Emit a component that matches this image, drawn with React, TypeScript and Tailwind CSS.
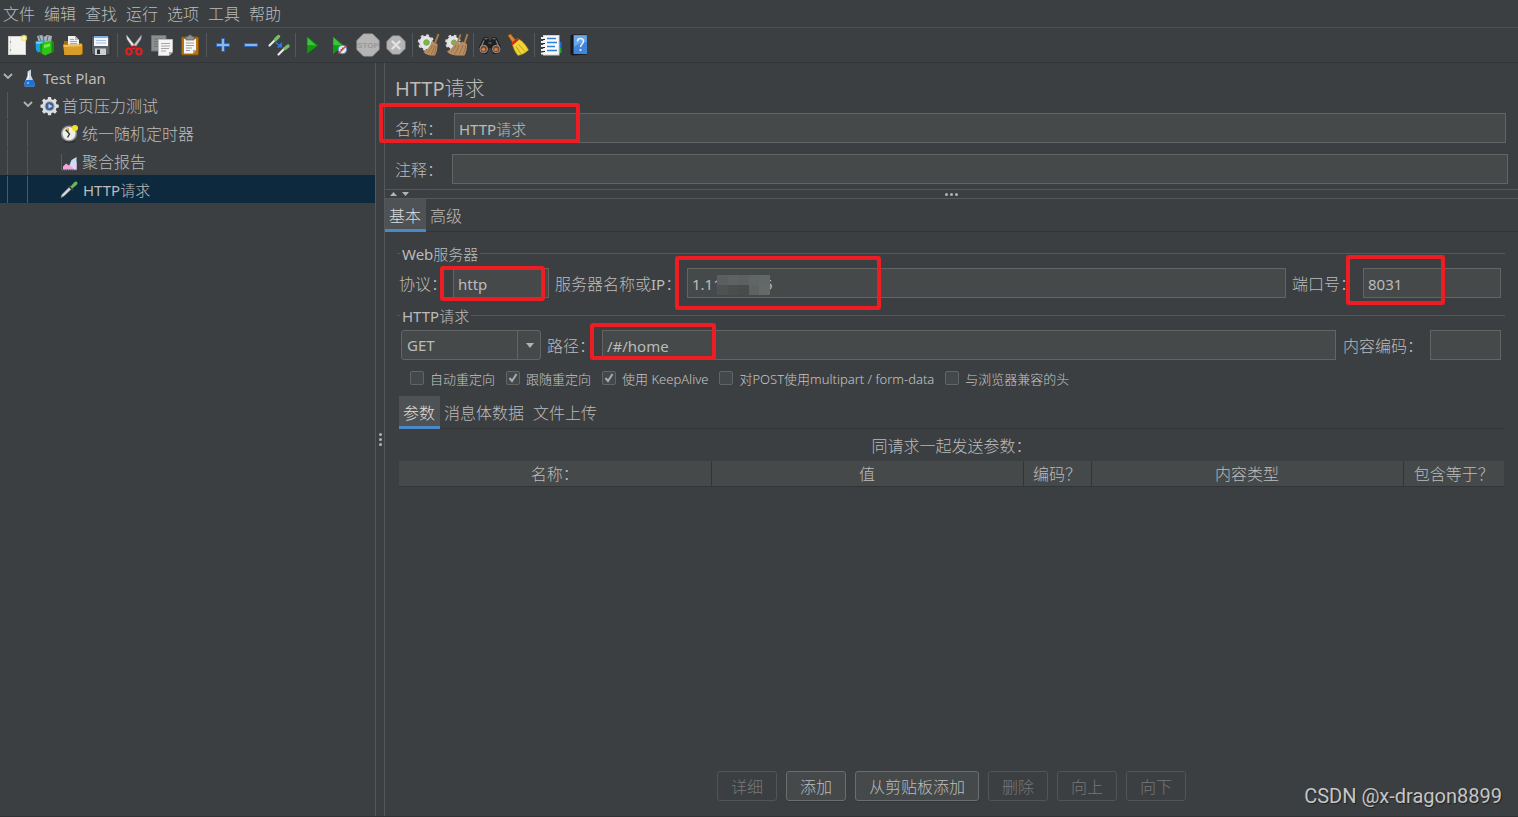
import type { ReactNode } from "react";

const menus = ["文件", "编辑", "查找", "运行", "选项", "工具", "帮助"];

function Svg({ children }: { children: ReactNode }) {
  return (
    <svg viewBox="0 0 24 24" className="size-6" aria-hidden="true">
      {children}
    </svg>
  );
}

const NewIcon = () => (
  <Svg>
    <rect x="3.5" y="3.5" width="17" height="18" fill="#f4f4f2" stroke="#cfcfcb" />
    <path d="M5.500 4v17" stroke="#e4e4e0" />
    <circle cx="5.500" cy="9" r=".7" fill="#888" />
    <circle cx="5.500" cy="17" r=".7" fill="#888" />
    <circle cx="19" cy="5" r="3.200" fill="#f1e36a" opacity=".8" />
    <circle cx="19" cy="5" r="1.500" fill="#fffbd0" />
  </Svg>
);

const TemplatesIcon = () => (
  <Svg>
    <path d="M4 3l5-1 2 2 3-2 5 1-1 6-12 1z" fill="#a9b3b5" />
    <path d="M6 3l2 5M10 3l1 5M15 3l-1 5" stroke="#5f6b6e" />
    <path d="M2.500 8l9-.8v10L5 19.500 3 17z" fill="#1d9fe0" />
    <path d="M3 9l7-.5-.5 2-6 .5z" fill="#6fd0fa" />
    <path d="M7 11.500l4-2.500v10l-3.500 2z" fill="#159a10" />
    <path d="M9.500 10l9-2.500 2.500 2v9L12 22.500l-3-2z" fill="#2fc515" />
    <path d="M18.500 7.500l2.500 2v9l-2.500 1z" fill="#128b0c" />
    <path d="M11 12l6-1.500v3L11 15z" fill="#74ea4f" />
  </Svg>
);

const OpenIcon = () => (
  <Svg>
    <path d="M3 8h4l2 2h11l2 2v9l-2 1H3z" fill="#a56d0c" />
    <path d="M7 3h7l4 4v7H7z" fill="#f1f1f1" />
    <path d="M14 3v4h4z" fill="#b9b9b9" />
    <path d="M9 6.500h4M9 8.500h7M9 10.500h7" stroke="#a5a5a5" />
    <path d="M2 11.500h16l3-1v10l-2 1.500H3.500z" fill="#d89c28" />
    <path d="M2.500 12h15.500l2.500-.8v2L3 14z" fill="#f0c25a" />
  </Svg>
);

const SaveIcon = () => (
  <Svg>
    <path d="M2.500 3h18.500v19H4.500l-2-2z" fill="#5a5f66" stroke="#2d3033" />
    <rect x="5" y="3" width="14" height="10" fill="#f3f6fa" />
    <path d="M5 3h14v2H5z" fill="#7fb0e6" />
    <path d="M7 7.500h10M7 10h10" stroke="#a8bfdc" />
    <rect x="6" y="15.500" width="11" height="6.500" fill="#cfcfcf" />
    <rect x="8" y="16.500" width="3" height="4.500" fill="#2d2f32" />
  </Svg>
);

const CutIcon = () => (
  <Svg>
    <path d="M4.500 2l9.500 12-2.500 1.500L5 6z" fill="#e9e9e9" stroke="#9b9b9b" strokeWidth=".5" />
    <path d="M19.500 2L10 14l2.500 1.500L19 6z" fill="#c9c9c9" stroke="#8c8c8c" strokeWidth=".5" />
    <path d="M12 13l3.500 4M12 13l-3.500 4" stroke="#c41212" strokeWidth="2.500" />
    <ellipse cx="7" cy="18.500" rx="2.700" ry="3" fill="none" stroke="#e02020" strokeWidth="2.200" />
    <ellipse cx="17" cy="18.500" rx="2.700" ry="3" fill="none" stroke="#e02020" strokeWidth="2.200" />
  </Svg>
);

const CopyIcon = () => (
  <Svg>
    <path d="M1.500 2.500H16V18H1.500z" fill="#8d8f90" stroke="#6f7172" />
    <path d="M4 6h9M4 8.500h5M4 11h4M4 13.500h4" stroke="#717374" />
    <path d="M8.500 6.500H22.500V19l-3.500 3.500H8.500z" fill="#f4f4f3" stroke="#bdbdbb" />
    <path d="M22.500 19H19v3.500z" fill="#a9a9a7" />
    <path d="M11 10.500h9M11 13h9M11 15.500h8M11 18h5" stroke="#a4a4a2" />
  </Svg>
);

const PasteIcon = () => (
  <Svg>
    <rect x="3.500" y="4" width="17" height="18" rx="1" fill="#b57418" stroke="#835009" />
    <path d="M6 6h12v11l-3 3.500H6z" fill="#f5f5f3" />
    <path d="M18 17h-3v3.500z" fill="#a7a7a5" />
    <path d="M8 3.500h2l1-1.500h2l1 1.500h2V7H8z" fill="#8e9191" stroke="#5c5f5f" strokeWidth=".7" />
    <path d="M8 10h8M8 12.500h8M8 15h6M8 17.500h4" stroke="#9f9f9d" />
  </Svg>
);

const PlusIcon = () => (
  <Svg>
    <path d="M10.500 5.500h3v5h5v3h-5v5h-3v-5h-5v-3h5z" fill="#8ab6ea" stroke="#2f67b8" />
  </Svg>
);

const MinusIcon = () => (
  <Svg>
    <path d="M5.500 10.500h13v3h-13z" fill="#8ab6ea" stroke="#2f67b8" />
  </Svg>
);

const ToggleIcon = () => (
  <Svg>
    <path d="M2.500 12.500l6-6" stroke="#e8e8e8" strokeWidth="2.200" strokeLinecap="round" />
    <path d="M8.500 6.500l3-3" stroke="#78bd68" strokeWidth="3.400" strokeLinecap="round" />
    <path d="M11.500 21.500l6-6" stroke="#e8e8e8" strokeWidth="2.200" strokeLinecap="round" />
    <path d="M18 15.500l3-2.500" stroke="#78bd68" strokeWidth="3.400" strokeLinecap="round" />
    <path d="M8.500 9.500l4.500 3" stroke="#2c7ae8" strokeWidth="1.300" />
    <path d="M15 9v5.500H9.500z" fill="#2c7ae8" />
  </Svg>
);

const StartIcon = () => (
  <Svg>
    <path d="M7 3.500v17.500L18 12.500z" fill="#129b12" stroke="#0b6e0b" strokeWidth=".5" />
    <path d="M7.500 4.500V12l8.500.5z" fill="#3cc43a" />
  </Svg>
);

const StartNoPauseIcon = () => (
  <Svg>
    <path d="M5 3.500v17.500L16 12.500z" fill="#129b12" />
    <path d="M5.500 4.500V12l8.500.5z" fill="#3cc43a" />
    <circle cx="14.500" cy="16.500" r="4.200" fill="#dfeaf6" stroke="#5f8ec2" />
    <path d="M12.500 16.500h2v-2" fill="none" stroke="#333" strokeWidth=".8" />
    <path d="M10.500 20.500l8-8" stroke="#e04444" strokeWidth="1.400" />
  </Svg>
);

const StopIcon = () => (
  <Svg>
    <path d="M7.500 1h9L23 7.500v9L16.500 23h-9L1 16.500v-9z" fill="#b5b5b5" stroke="#a5a5a5" />
    <text
      x="12"
      y="15"
      textAnchor="middle"
      fontSize="8"
      fontWeight="700"
      fontFamily="Liberation Sans, sans-serif"
      fill="#989898"
    >
      STOP
    </text>
  </Svg>
);

const ShutdownIcon = () => (
  <Svg>
    <path d="M8.500 3h7L21 8.500v7L15.500 21h-7L3 15.500v-7z" fill="#b5b5b5" stroke="#a5a5a5" />
    <path d="M8.500 8.500l7 7M15.500 8.500l-7 7" stroke="#e2e2e2" strokeWidth="2.400" strokeLinecap="round" />
  </Svg>
);

function Gear({ cx, cy, r }: { cx: number; cy: number; r: number }) {
  return (
    <circle
      cx={cx}
      cy={cy}
      r={r}
      fill="#e6e6e6"
      stroke="#dcdcdc"
      strokeWidth="2.800"
      strokeDasharray={`${(r * Math.PI) / 8} ${(r * Math.PI) / 8}`}
    />
  );
}

const ClearIcon = () => (
  <Svg>
    <Gear cx={9} cy={9.5} r={6.8} />
    <circle cx="9.500" cy="9.500" r="2.800" fill="#69c425" stroke="#8d968a" />
    <path d="M21.500 1l-3.500 9" stroke="#a97a4c" strokeWidth="2" />
    <path d="M14.500 8.500l6 2.500c0 4-.5 8-2.500 11.500-4 .5-9-.5-11.500-3.500 4-2.500 7-6 8-10.500z" fill="#b98d62" />
    <path d="M15.500 12c-1 3-3 6-5 8M17.500 12.500c-.5 3-2 6.500-3.500 9M19 13c0 3-1 6-2 8.500" fill="none" stroke="#8a6440" strokeWidth=".7" />
  </Svg>
);

const ClearAllIcon = () => (
  <Svg>
    <Gear cx={8} cy={9.5} r={6.5} />
    <circle cx="9" cy="9.500" r="2.600" fill="#69c425" stroke="#8d968a" />
    <path d="M15.500 1.500l-3 8.500M22.500 1l-3 9" stroke="#a97a4c" strokeWidth="2" />
    <path d="M10 8.500l5 2 2.500-2 4.500 2.500c0 4-.5 8-2.500 11.500H12c-4 0-8-1.500-10-4 4-2 7-5.500 8-10z" fill="#b98d62" />
    <path d="M11 12c-1 3-3 5-5 7M13.500 12.500c-.5 3-2 6-4 9M18 12c-1 3-2 6-4 9M20.500 12.500c0 3-1 6-2.500 8.500" fill="none" stroke="#8a6440" strokeWidth=".7" />
  </Svg>
);

const SearchIcon = () => (
  <Svg>
    <path d="M5.500 4.500L10 4l1 3.500h2L14 4l4.500.5L23 14l-1 4.500-3 2.500h-4l-2-6h-2l-2 6H5l-3-2.500L1 14z" fill="#1d1f21" />
    <path d="M6.500 6l3-.5M14.500 5.500l3 .5M10.500 10h3M6 7.500L3.500 13M18 7.500l2.500 5.500" stroke="#808284" strokeWidth="1.200" />
    <circle cx="5.700" cy="16" r="3.800" fill="#7b4928" stroke="#9c9c9c" strokeWidth=".9" />
    <circle cx="18.300" cy="16" r="3.800" fill="#7b4928" stroke="#9c9c9c" strokeWidth=".9" />
    <circle cx="5.500" cy="16.500" r="1.800" fill="#c97f48" />
    <circle cx="18" cy="16.500" r="1.800" fill="#c97f48" />
  </Svg>
);

const ResetSearchIcon = () => (
  <Svg>
    <path d="M2 2.500L4.500 1l5 6-3 2.500z" fill="#d9882a" stroke="#99560d" strokeWidth=".6" />
    <path d="M6 10l5.500-4.500c4 1.500 8 6 11 11.500-3 3-7 5-10.500 5.500C9 19 7 14.500 6 10z" fill="#efd435" stroke="#b2910d" strokeWidth=".6" />
    <path d="M5.500 10l6-5 1.800 1.500-7 6z" fill="#d52420" />
    <path d="M10 13.500l5 7.500M12.500 11.500l6.500 7" stroke="#bd9d15" />
  </Svg>
);

const FunctionIcon = () => (
  <Svg>
    <rect x="20" y="9" width="2.500" height="6" fill="#1d6fd8" />
    <rect x="20" y="15" width="2.500" height="5" fill="#21a52e" />
    <rect x="4.500" y="2.500" width="15.500" height="19.500" fill="#fafafa" stroke="#cfcfcf" />
    <path d="M8 5.500h9M8 9.500h10M8 13.500h8M8 17.500h10" stroke="#2f7fd8" strokeWidth="1.500" />
    <path d="M2 5h4M2 9h4M2 13h4M2 17h4M2 20.500h4" stroke="#f0f0f0" strokeWidth="1.800" />
    <path d="M4 6.500h2M4 10.500h2M4 14.500h2M4 18.500h2" stroke="#222" />
  </Svg>
);

const HelpIcon = () => (
  <Svg>
    <path d="M3.500 2.500L6 1.500h14v20L5.500 22.500l-2-1z" fill="#16181b" />
    <path d="M6.500 2h13.500v19H6.500z" fill="#3f86da" />
    <path d="M7 2.500h12.500V9c-5 0-8.500 2-12.500 5z" fill="#69a6ea" />
    <path d="M10.500 8.500c0-4 6-4 6-.2 0 2.700-3 2.700-3 5.700" fill="none" stroke="#eef4fb" strokeWidth="1.500" />
    <circle cx="13.500" cy="17" r="1.100" fill="#eef4fb" />
  </Svg>
);

const toolGroups: { label: string; icon: ReactNode; disabled?: boolean }[][] = [
  [
    { label: "新建", icon: <NewIcon /> },
    { label: "模板", icon: <TemplatesIcon /> },
    { label: "打开", icon: <OpenIcon /> },
    { label: "保存", icon: <SaveIcon /> },
  ],
  [
    { label: "剪切", icon: <CutIcon /> },
    { label: "复制", icon: <CopyIcon /> },
    { label: "粘贴", icon: <PasteIcon /> },
  ],
  [
    { label: "展开", icon: <PlusIcon /> },
    { label: "收起", icon: <MinusIcon /> },
    { label: "切换", icon: <ToggleIcon /> },
  ],
  [
    { label: "启动", icon: <StartIcon /> },
    { label: "不停顿启动", icon: <StartNoPauseIcon /> },
    { label: "停止", icon: <StopIcon />, disabled: true },
    { label: "关闭", icon: <ShutdownIcon />, disabled: true },
  ],
  [
    { label: "清除", icon: <ClearIcon /> },
    { label: "清除全部", icon: <ClearAllIcon /> },
  ],
  [
    { label: "搜索", icon: <SearchIcon /> },
    { label: "重置搜索", icon: <ResetSearchIcon /> },
  ],
  [
    { label: "函数助手", icon: <FunctionIcon /> },
    { label: "帮助", icon: <HelpIcon /> },
  ],
];

function TreeSvg({ children }: { children: ReactNode }) {
  return (
    <svg viewBox="0 0 20 20" className="size-5 shrink-0" aria-hidden="true">
      {children}
    </svg>
  );
}

const FlaskIcon = () => (
  <TreeSvg>
    <path d="M7.500 3.500L11 1.500v6l4 9c.4 1-.3 2-1.500 2H5.500c-1.200 0-1.900-1-1.500-2l3.500-9z" fill="#c9d6e2" />
    <path d="M6 12h7.200l2 4.500c.4 1-.3 2-1.500 2H5.500c-1.200 0-1.900-1-1.500-2z" fill="#1f72d6" />
    <path d="M8.500 5v4L7 12" fill="none" stroke="#fff" />
    <circle cx="8" cy="15" r="1.200" fill="#6fb1f5" />
  </TreeSvg>
);

const ThreadGroupIcon = () => (
  <TreeSvg>
    <path
      d="M8 1h3l.4 2.200 1.700.7 1.900-1.300 2 2.100-1.200 1.900.7 1.700 2.300.4v2.900l-2.300.4-.7 1.700 1.200 1.900-2 2.100-1.900-1.300-1.700.7-.4 2.100H8l-.4-2.100-1.700-.7-1.900 1.300-2-2.100 1.200-1.900-.7-1.700L.500 11.600V8.700l2-.4.7-1.700L2 4.700l2-2.100 1.900 1.300 1.700-.7z"
      fill="#dedede"
    />
    <circle cx="9.600" cy="10.200" r="5" fill="#9aa4b1" />
    <circle cx="9.600" cy="10.200" r="3.900" fill="#3d6194" />
    <path d="M8.500 7.800v4.800l3.800-2.400z" fill="#c9d8ea" />
  </TreeSvg>
);

const TimerIcon = () => (
  <TreeSvg>
    <ellipse cx="9.500" cy="17.500" rx="6" ry="1.500" fill="#2c2e30" />
    <circle cx="9" cy="9.500" r="7.300" fill="#efefea" stroke="#8f8f96" strokeWidth="1.500" />
    <path d="M9 9.500L4.300 6.500A5.500 5.500 0 0 1 9 4z" fill="#c9a642" />
    <path d="M6 6l3.500 4-2 3.500" fill="none" stroke="#333" strokeWidth="1.300" />
    <circle cx="15" cy="4" r="3" fill="#f3e31e" />
  </TreeSvg>
);

const ReportIcon = () => (
  <TreeSvg>
    <path d="M1.500 2.500v15.500h15" fill="none" stroke="#777a7c" strokeDasharray="1 1" />
    <path d="M3 17.500v-3l3-3 3 2 3-2 4 6z" fill="#f2a3e0" />
    <path d="M9.500 13l2-5 5-3v12.500h-2z" fill="#bfe2f8" />
    <path d="M11.500 11.500l4 6h1V10z" fill="#f7c9ee" />
  </TreeSvg>
);

const SamplerIcon = () => (
  <TreeSvg>
    <path d="M1 17.500l1-3 8-8 2 2-8 7.500z" fill="#d9dcdc" stroke="#8f9494" strokeWidth=".6" />
    <path d="M8.500 6l4.500 4.500" stroke="#3a3f3a" strokeWidth="1.600" />
    <path d="M10.500 6.500l4-4.500c2-1.500 4 .5 2.500 2.500L12.500 8.500z" fill="#6fb35c" />
  </TreeSvg>
);

function Guide() {
  return (
    <span className="flex w-5 self-stretch pl-[7px]">
      <span className="w-px bg-[#55585a]" />
    </span>
  );
}

function Expander() {
  return (
    <button type="button" aria-label="收起节点" className="flex w-5 pl-[3px]">
      <svg viewBox="0 0 10 10" className="-mt-1 size-[10px]" aria-hidden="true">
        <path d="M1 3l4 4 4-4" fill="none" stroke="#b0b2b3" strokeWidth="1.800" />
      </svg>
    </button>
  );
}

function Leaf({ icon, children, selected }: { icon: ReactNode; children: ReactNode; selected?: boolean }) {
  return (
    <li role="treeitem" aria-selected={selected} className={selected ? "bg-[#0d293e]" : undefined}>
      <Guide />
      <Guide />
      <span className="w-5" />
      {icon}
      <span className={selected ? "pt-px pl-[3px] text-[15px]" : "pl-[2px]"}>{children}</span>
    </li>
  );
}

function Frame({ className }: { className: string }) {
  return (
    <span
      aria-hidden="true"
      className={`pointer-events-none absolute z-10 rounded-[3px] border-4 border-[#ee1c23] ${className}`}
    />
  );
}

const field =
  "block h-[30px] w-full min-w-0 border border-[#646464] bg-[#45494a] px-1 pt-px text-[15px] text-[#bbbbbb] outline-none";

function Tabs({ items }: { items: string[] }) {
  return (
    <div role="tablist" className="flex h-[33px] border-b border-[#323537]">
      {items.map((t, i) => (
        <button
          key={t}
          type="button"
          role="tab"
          aria-selected={i === 0}
          className={
            i === 0
              ? "h-[33px] border-b-[3px] border-[#4a88c7] bg-[#4e5254] pt-[3px] pr-[5px] pl-1 text-[#dddddd]"
              : "h-[33px] pt-[3px] pr-[5px] pb-[3px] pl-1"
          }
        >
          {t}
        </button>
      ))}
    </div>
  );
}

const checks = [
  { label: "自动重定向", on: false },
  { label: "跟随重定向", on: true },
  { label: "使用 KeepAlive", on: true },
  { label: "对POST使用multipart / form-data", on: false },
  { label: "与浏览器兼容的头", on: false },
];

const actions = [
  { label: "详细", on: false },
  { label: "添加", on: true },
  { label: "从剪贴板添加", on: true },
  { label: "删除", on: false },
  { label: "向上", on: false },
  { label: "向下", on: false },
];

const mosaic = [
  "bg-[#5a5e5f]",
  "bg-[#5f6263]",
  "bg-[#5c6061]",
  "bg-[#606566]",
  "bg-[#626768]",
  "bg-[#505251]",
  "bg-[#4c4e4d]",
  "bg-[#494c4c]",
  "bg-[#616162]",
  "bg-[#65696a]",
];

export default function App() {
  return (
    <div className="relative flex min-h-screen flex-col border-b border-[#2f3234] bg-[#3c3f41] font-['Noto_Sans','Noto_Sans_CJK_SC_Light','Noto_Sans_CJK_SC',sans-serif] text-base text-[#bbbbbb]">
      <nav className="flex h-7 items-center gap-[9px] border-b border-[#515151] pl-[3px]">
        {menus.map((m) => (
          <button key={m} type="button" className="leading-6">
            {m}
          </button>
        ))}
      </nav>

      <div role="toolbar" className="flex h-[35px] items-center border-b border-[#323537] pl-[3px]">
        {toolGroups.map((g, i) => (
          <div key={g[0].label} className="flex items-center">
            {i > 0 && <span className="mx-[2px] h-6 w-px bg-[#55585a]" />}
            {g.map((t) => (
              <button
                key={t.label}
                type="button"
                aria-label={t.label}
                disabled={t.disabled}
                className="flex w-7 justify-center"
              >
                {t.icon}
              </button>
            ))}
          </div>
        ))}
      </div>

      <div className="flex flex-1">
        <aside className="w-[375px] shrink-0">
          <ul role="tree" className="*:flex *:h-7 *:items-center *:pt-px">
            <li role="treeitem">
              <Expander />
              <FlaskIcon />
              <span className="pt-px pl-[3px] text-[15px]">Test Plan</span>
            </li>
            <li role="treeitem">
              <Guide />
              <Expander />
              <ThreadGroupIcon />
              <span className="pl-[2px]">首页压力测试</span>
            </li>
            <Leaf icon={<TimerIcon />}>统一随机定时器</Leaf>
            <Leaf icon={<ReportIcon />}>聚合报告</Leaf>
            <Leaf icon={<SamplerIcon />} selected>
              HTTP请求
            </Leaf>
          </ul>
        </aside>

        <div className="flex w-[10px] shrink-0 flex-col items-center justify-center gap-[2px] border-x border-[#55585a]">
          <span className="size-[3px] rounded-full bg-[#b0b2b3]" />
          <span className="size-[3px] rounded-full bg-[#b0b2b3]" />
          <span className="size-[3px] rounded-full bg-[#b0b2b3]" />
        </div>

        <main className="flex min-w-0 flex-1 flex-col">
          <section className="px-[10px] pt-[10px] pb-[5px]">
            <h1 className="text-xl leading-8">HTTP请求</h1>
            <div className="relative mt-[8px] flex items-center">
              <label htmlFor="name" className="w-[57px] shrink-0 pt-px">
                名称：
              </label>
              <div className="mx-[2px] flex-1">
                <input id="name" defaultValue="HTTP请求" className={field} />
              </div>
              <Frame className="-top-[10px] -left-4 h-10 w-[201px]" />
            </div>
            <div className="mt-[11px] flex items-center">
              <label htmlFor="comment" className="w-[57px] shrink-0 pt-px">
                注释：
              </label>
              <input id="comment" className={field} />
            </div>
          </section>

          <div className="flex h-[10px] items-center border-y border-[#55585a] pl-[5px]">
            <svg viewBox="0 0 20 6" className="h-[6px] w-5" aria-hidden="true">
              <path d="M0 5h7L3.500 1z" fill="#b0b2b3" />
              <path d="M12 1h7l-3.500 4z" fill="#b0b2b3" />
            </svg>
            <div className="flex flex-1 justify-center gap-[2px] pr-[26px]">
              <span className="size-[3px] rounded-full bg-[#b0b2b3]" />
              <span className="size-[3px] rounded-full bg-[#b0b2b3]" />
              <span className="size-[3px] rounded-full bg-[#b0b2b3]" />
            </div>
          </div>

          <Tabs items={["基本", "高级"]} />

          <div className="flex flex-1 flex-col pt-[10px] pr-[13px] pb-[15px] pl-3">
            <fieldset className="border-t border-[#55585a] pt-[3px] pr-1 pl-[2px]">
              <legend className="ml-[1px] px-[2px] pt-px text-[15px] leading-[22px]">Web服务器</legend>
              <div className="flex items-center">
                <label htmlFor="protocol" className="w-[54px] shrink-0 pt-px">
                  协议：
                </label>
                <div className="relative w-24 shrink-0">
                  <input id="protocol" defaultValue="http" className={field} />
                  <Frame className="-top-[2px] -left-[13px] h-[35px] w-[105px]" />
                </div>
                <label htmlFor="server" className="ml-[6px] w-[132px] shrink-0 pt-px whitespace-nowrap">
                  服务器名称或<span className="text-[15px]">IP</span>：
                </label>
                <div className="relative flex-1">
                  <input id="server" defaultValue="1.11" className={field} />
                  <span className="absolute top-[5px] left-[77px] text-[15px] leading-[22px]">5</span>
                  <span aria-hidden="true" className="absolute top-[7px] left-[30px] grid h-5 w-[53px] grid-cols-5">
                    {mosaic.map((c) => (
                      <span key={c} className={c} />
                    ))}
                  </span>
                  <Frame className="-top-3 -left-3 h-[54px] w-[206px]" />
                </div>
                <label htmlFor="port" className="ml-[6px] w-[71px] shrink-0 pt-px whitespace-nowrap">
                  端口号：
                </label>
                <div className="relative w-[138px] shrink-0">
                  <input id="port" defaultValue="8031" className={field} />
                  <Frame className="-top-[13px] -left-[17px] h-[50px] w-[99px]" />
                </div>
              </div>
            </fieldset>

            <fieldset className="mt-[6px] border-t border-[#55585a] pt-[3px] pr-1 pl-1">
              <legend className="-ml-[1px] px-[2px] pt-px text-[15px] leading-[22px]">HTTP请求</legend>
              <div className="flex items-center">
                <div className="relative w-[140px] shrink-0">
                  <select
                    aria-label="方法"
                    className="block h-[30px] w-full appearance-none rounded-[3px] border border-[#646464] bg-[#45494a] px-[5px] pt-px text-[15px] outline-none"
                  >
                    <option>GET</option>
                    <option>POST</option>
                  </select>
                  <span className="pointer-events-none absolute inset-y-0 right-0 flex w-6 items-center justify-center border-l border-[#646464]">
                    <svg viewBox="0 0 8 5" className="h-[5px] w-2" aria-hidden="true">
                      <path d="M0 0h8L4 5z" fill="#b0b2b3" />
                    </svg>
                  </span>
                </div>
                <label htmlFor="path" className="ml-[6px] w-[55px] shrink-0 pt-px whitespace-nowrap">
                  路径：
                </label>
                <div className="relative flex-1">
                  <input id="path" defaultValue="/#/home" className={field} />
                  <Frame className="-top-[7px] -left-3 h-[37px] w-[126px]" />
                </div>
                <label htmlFor="encoding" className="ml-[7px] w-[87px] shrink-0 pt-px whitespace-nowrap">
                  内容编码：
                </label>
                <div className="w-[71px] shrink-0">
                  <input id="encoding" className={field} />
                </div>
              </div>
            </fieldset>

            <div className="mt-[8px] flex h-6 items-center gap-[11px] pl-[13px] text-[13px] font-light text-[#c4c4c4]">
              {checks.map((c) => (
                <label key={c.label} className="flex items-center gap-[6px] whitespace-nowrap">
                  <span className="-mt-[5px] grid size-[14px]">
                    <input
                      type="checkbox"
                      defaultChecked={c.on}
                      className="peer col-start-1 row-start-1 size-[14px] appearance-none rounded-[2px] border border-[#646464] bg-[#43494a]"
                    />
                    <svg
                      viewBox="0 0 14 14"
                      aria-hidden="true"
                      className="pointer-events-none invisible col-start-1 row-start-1 size-[14px] peer-checked:visible"
                    >
                      <path d="M3.500 7l2.500 3 4.500-7" fill="none" stroke="#a7abad" strokeWidth="2" />
                    </svg>
                  </span>
                  {c.label}
                </label>
              ))}
            </div>

            <div className="mt-[4px] mr-px ml-[2px] flex flex-1 flex-col">
              <Tabs items={["参数", "消息体数据", "文件上传"]} />
              <table className="w-full table-fixed">
                <caption className="h-8 pt-[3px] text-center leading-7">同请求一起发送参数：</caption>
                <colgroup>
                  <col />
                  <col />
                  <col className="w-[68px]" />
                  <col />
                  <col className="w-[101px]" />
                </colgroup>
                <thead>
                  <tr className="h-[25px] border-b border-[#323537] bg-[#45494a] *:border-r *:border-[#323537] *:p-0 *:pt-[2px] *:leading-[22px] *:font-normal *:last:border-r-0">
                    <th>名称：</th>
                    <th>值</th>
                    <th>编码？</th>
                    <th>内容类型</th>
                    <th>包含等于？</th>
                  </tr>
                </thead>
              </table>
              <div className="mt-auto flex justify-center gap-[9px]">
                {actions.map((a) => (
                  <button
                    key={a.label}
                    type="button"
                    disabled={!a.on}
                    className="h-[30px] rounded-[3px] border border-[#6b6d6e] bg-[#45494a] px-[13px] pt-px leading-6 shadow-[0_1px_0_#35383a] disabled:border-[#525556] disabled:bg-transparent disabled:text-[#777777] disabled:shadow-none"
                  >
                    {a.label}
                  </button>
                ))}
              </div>
            </div>
          </div>
        </main>
      </div>

      <p className="absolute right-4 bottom-2 font-['Roboto',sans-serif] text-xl leading-6 text-[#c4c6c7] [text-shadow:1px_1px_1px_#222]">
        CSDN @x-dragon8899
      </p>
    </div>
  );
}
